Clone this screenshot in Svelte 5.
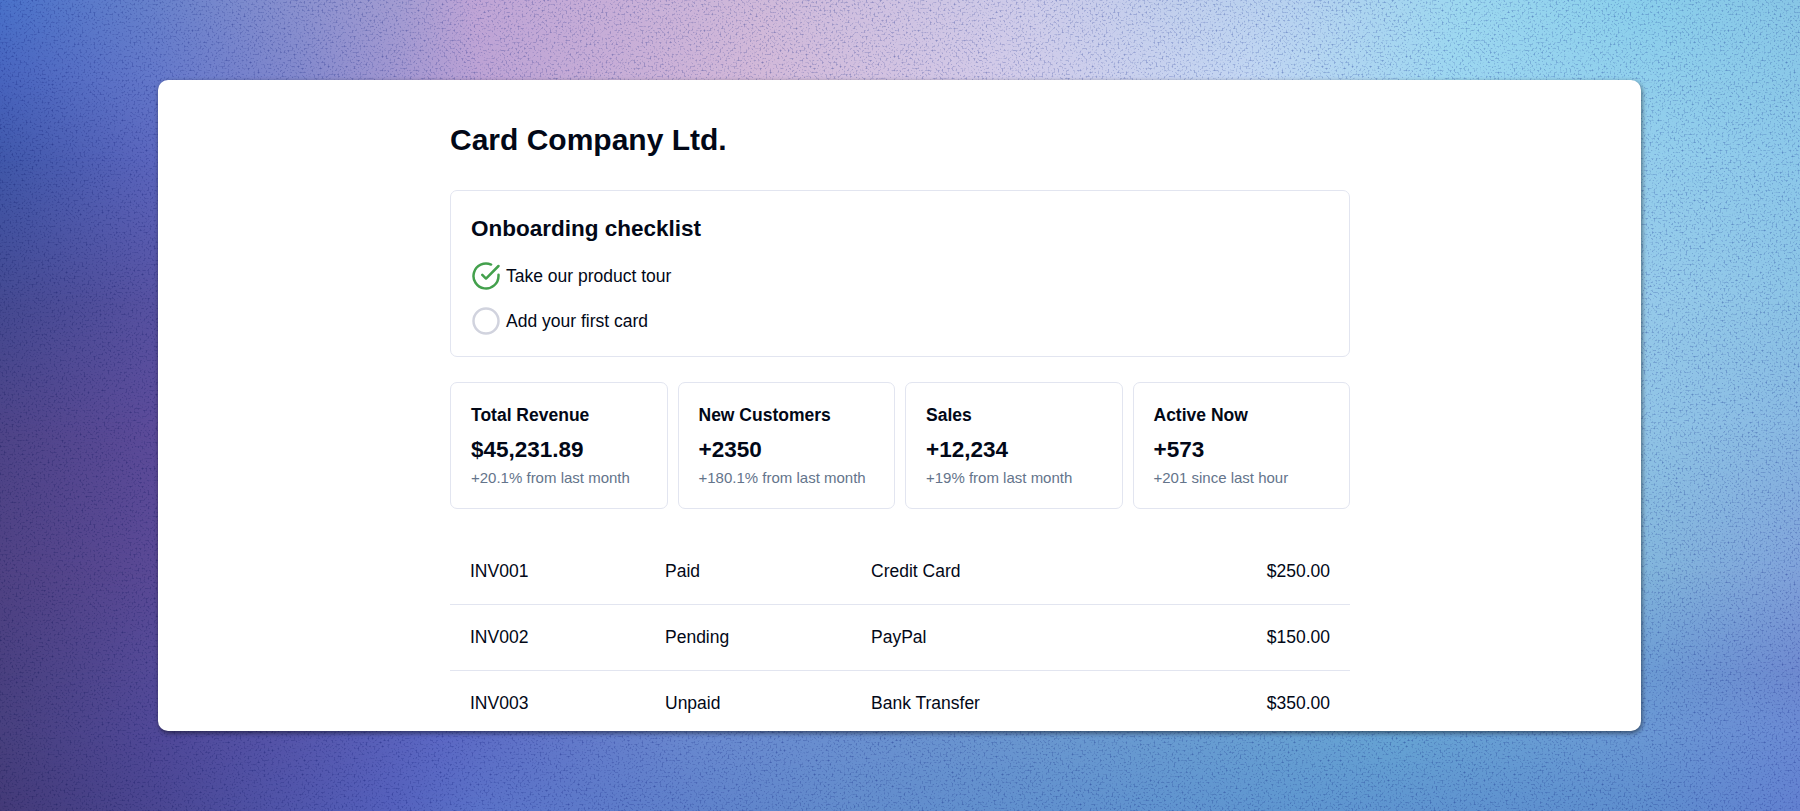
<script>
  const bands = [
    { y: 0, stops: '#4a72ca 0, #6882cc 158px, #a39cd2 400px, #c0a5d6 475px, #d0b9da 760px, #ceccea 1030px, #b6d2f0 1300px, #9dd8f0 1460px, #8acfec 1640px, #88c6e6 1800px' },
    { y: 80, stops: '#4864be 0, #6478ca 158px, #8288cc 300px, #bca2d4 480px, #d2b8d8 760px, #d2cae8 1000px, #c2d6f2 1250px, #9cd6f0 1450px, #90cfec 1640px, #8ac8e8 1800px' },
    { y: 160, stops: '#4058aa 0, #5c66be 158px, #94ceec 1642px, #8cc8ea 1800px' },
    { y: 300, stops: '#454a92 0, #5752a2 158px, #96caea 1642px, #8cc4e6 1800px' },
    { y: 430, stops: '#4e4488 0, #5c4b9a 158px, #90c4e6 1642px, #88b8e2 1800px' },
    { y: 570, stops: '#504284 0, #5a4996 158px, #82b6dc 1642px, #80a2da 1800px' },
    { y: 670, stops: '#4a4080 0, #544a98 158px, #6c9cd4 1642px, #6f8ad0 1800px' },
    { y: 735, stops: '#48407e 0, #504898 158px, #5656ac 300px, #5c68c4 440px, #6a8ad0 700px, #6a98d0 1050px, #66a4d4 1400px, #6a98d4 1642px, #6a8ad4 1800px' },
    { y: 811, stops: '#443a78 0, #4a4692 158px, #5460bc 390px, #5a72c8 480px, #628ccc 850px, #5e96d0 1300px, #5e8ece 1642px, #6280d0 1800px' }
  ];

  const layers = bands.map((band, i) => {
    const mask = i === 0 ? 'none' : `linear-gradient(transparent ${bands[i - 1].y}px, #000 ${band.y}px)`;
    return `background:linear-gradient(90deg, ${band.stops});mask-image:${mask}`;
  });

  const tasks = [
    { label: 'Take our product tour', done: true },
    { label: 'Add your first card', done: false }
  ];

  const stats = [
    { label: 'Total Revenue', value: '$45,231.89', note: '+20.1% from last month' },
    { label: 'New Customers', value: '+2350', note: '+180.1% from last month' },
    { label: 'Sales', value: '+12,234', note: '+19% from last month' },
    { label: 'Active Now', value: '+573', note: '+201 since last hour' }
  ];

  const invoices = [
    { id: 'INV001', status: 'Paid', method: 'Credit Card', amount: '$250.00' },
    { id: 'INV002', status: 'Pending', method: 'PayPal', amount: '$150.00' },
    { id: 'INV003', status: 'Unpaid', method: 'Bank Transfer', amount: '$350.00' }
  ];
</script>

<div class="page">
  <div class="backdrop" aria-hidden="true">
    {#each layers as layer}
      <div class="layer" style={layer}></div>
    {/each}
    <svg class="layer grain" width="100%" height="100%">
      <filter id="grain" x="0" y="0" width="100%" height="100%" color-interpolation-filters="sRGB">
        <feTurbulence type="fractalNoise" baseFrequency="0.5" numOctaves="3" seed="7" />
        <feColorMatrix values="0 0 0 0 0.45  0 0 0 0 0.52  0 0 0 0 0.76  2.6 0 0 0 -1.38" />
      </filter>
      <rect width="100%" height="100%" filter="url(#grain)" />
    </svg>
  </div>

  <main class="window">
    <div class="content">
      <h1>Card Company Ltd.</h1>

      <section class="box checklist">
        <h2>Onboarding checklist</h2>
        <ul>
          {#each tasks as task}
            <li>
              {#if task.done}
                <svg class="icon done" viewBox="0 0 24 24">
                  <path d="M22 11.08V12a10 10 0 1 1-5.93-9.14" />
                  <path d="M22 4 12 14.01l-3-3" />
                </svg>
              {:else}
                <svg class="icon" viewBox="0 0 24 24"><circle cx="12" cy="12" r="10" /></svg>
              {/if}
              <span>{task.label}</span>
            </li>
          {/each}
        </ul>
      </section>

      <section class="stats">
        {#each stats as stat}
          <div class="box stat">
            <h3>{stat.label}</h3>
            <div class="value">{stat.value}</div>
            <p>{stat.note}</p>
          </div>
        {/each}
      </section>

      <div class="invoices">
        {#each invoices as invoice}
          <div class="row">
            <span>{invoice.id}</span>
            <span>{invoice.status}</span>
            <span>{invoice.method}</span>
            <span class="amount">{invoice.amount}</span>
          </div>
        {/each}
      </div>
    </div>
  </main>
</div>

<style>
  :global(body) {
    margin: 0;
    overflow: hidden;
  }
  .page {
    position: relative;
    box-sizing: border-box;
    width: 1800px;
    height: 811px;
    padding: 80px 159px 80px 158px;
    overflow: hidden;
    font-family: 'Liberation Sans', Arial, sans-serif;
    font-size: 17.5px;
    color: #020817;
  }
  .backdrop,
  .layer {
    position: absolute;
    inset: 0;
  }
  .backdrop {
    isolation: isolate;
  }
  .grain {
    mix-blend-mode: multiply;
    opacity: 0.8;
  }
  .window {
    position: relative;
    box-sizing: border-box;
    height: 651px;
    padding: 40px 291px 0 292px;
    overflow: hidden;
    border-radius: 10px;
    background: #fff;
    box-shadow: 1px 2px 5px rgba(0, 0, 0, 0.5);
  }
  .content {
    display: flex;
    flex-direction: column;
  }
  h1, h2, h3, p, ul {
    margin: 0;
    padding: 0;
  }
  h1 {
    margin-bottom: 30px;
    font-size: 30px;
    line-height: 40px;
  }
  .box {
    box-sizing: border-box;
    border: 1px solid #e2e5f0;
    border-radius: 7px;
  }
  .checklist {
    height: 167px;
    margin-bottom: 25px;
    padding: 23px 20px 20px;
  }
  h2 {
    font-size: 22.5px;
    line-height: 30px;
  }
  ul {
    display: flex;
    flex-direction: column;
    gap: 10px;
    margin-top: 14px;
    list-style: none;
  }
  li {
    display: flex;
    align-items: center;
    gap: 5px;
    height: 35px;
  }
  li span {
    padding-top: 2px;
  }
  .icon {
    width: 30px;
    height: 30px;
    fill: none;
    stroke: #d1d3de;
    stroke-width: 2;
    stroke-linecap: round;
    stroke-linejoin: round;
  }
  .done {
    stroke: #43a04c;
  }
  .stats {
    display: grid;
    grid-template-columns: repeat(4, 1fr);
    gap: 10px;
    margin-bottom: 30px;
  }
  .stat {
    height: 127px;
    padding: 20px;
  }
  h3 {
    font-size: 17.5px;
    line-height: 25px;
  }
  .value {
    margin-top: 7px;
    font-size: 22.5px;
    font-weight: 700;
    line-height: 30px;
  }
  p {
    margin-top: 2px;
    font-size: 15px;
    line-height: 22px;
    color: #64748b;
  }
  .row {
    display: grid;
    grid-template-columns: 195px 206px 1fr auto;
    height: 65px;
    padding: 0 20px;
    border-bottom: 1px solid #e2e5f0;
    line-height: 65px;
  }
  .amount {
    text-align: right;
  }
</style>
